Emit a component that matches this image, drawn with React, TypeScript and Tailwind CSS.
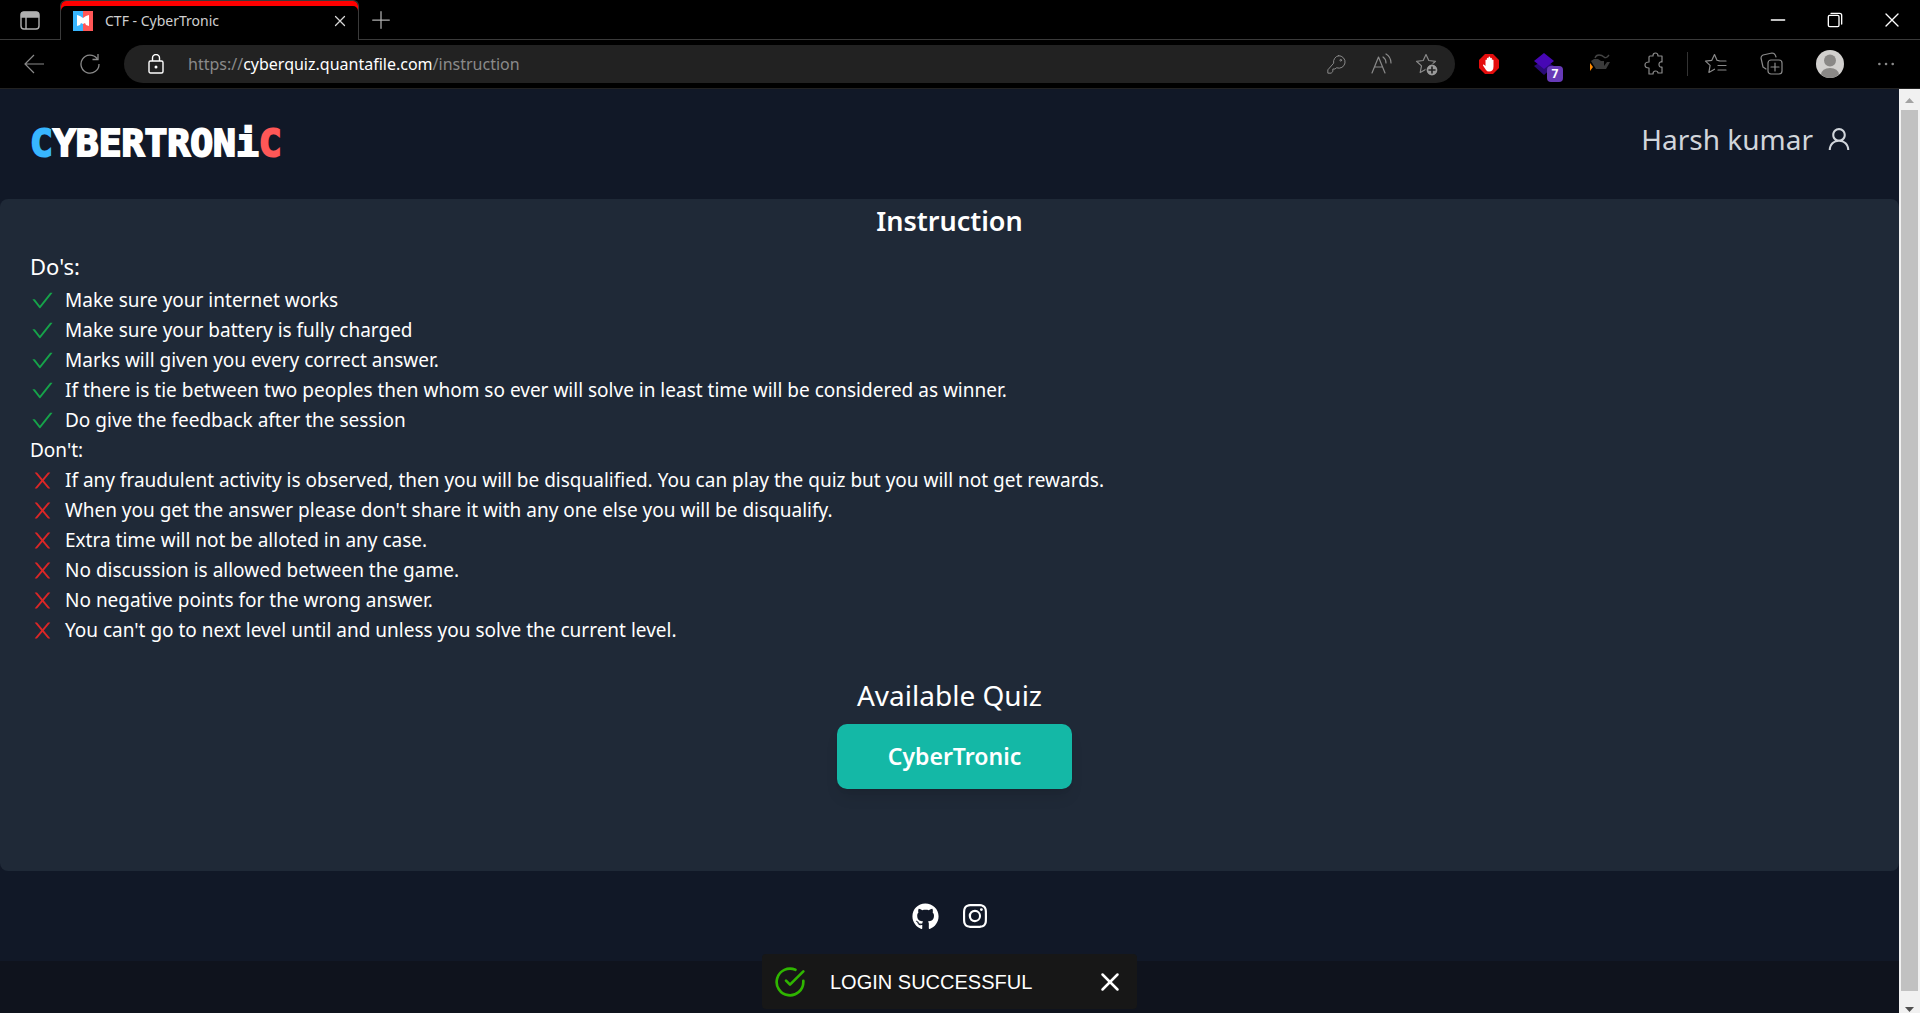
import type { ReactNode } from "react";
import { AiOutlineCheck, AiOutlineUser } from "react-icons/ai";
import { FaGithub } from "react-icons/fa";
import { BsInstagram } from "react-icons/bs";
import { FiCheckCircle, FiX } from "react-icons/fi";

const dos = [
  "Make sure your internet works",
  "Make sure your battery is fully charged",
  "Marks will given you every correct answer.",
  "If there is tie between two peoples then whom so ever will solve in least time will be considered as winner.",
  "Do give the feedback after the session",
];

const donts = [
  "If any fraudulent activity is observed, then you will be disqualified. You can play the quiz but you will not get rewards.",
  "When you get the answer please don't share it with any one else you will be disqualify.",
  "Extra time will not be alloted in any case.",
  "No discussion is allowed between the game.",
  "No negative points for the wrong answer.",
  "You can't go to next level until and unless you solve the current level.",
];

function Line({ children, className = "size-6" }: { children: ReactNode; className?: string }) {
  return (
    <svg
      viewBox="0 0 24 24"
      fill="none"
      stroke="currentColor"
      strokeWidth="1.2"
      strokeLinecap="round"
      strokeLinejoin="round"
      className={className}
    >
      {children}
    </svg>
  );
}

function CrossMark() {
  return (
    <svg viewBox="0 0 1024 1024" fill="currentColor" className="size-[25px] shrink-0 text-[#dc2626]">
      <path d="M563.8 512l262.5-312.9c4.4-5.2.7-13.1-6.1-13.1h-79.8c-4.7 0-9.2 2.1-12.3 5.7L511.6 449.8 295.1 191.7c-3-3.6-7.500-5.700-12.300-5.700H203c-6.800 0-10.500 7.900-6.100 13.100L459.400 512 196.900 824.900A7.950 7.950 0 0 0 203 838h79.800c4.700 0 9.200-2.100 12.300-5.700l216.500-258.100 216.500 258.100c3 3.600 7.500 5.700 12.300 5.700h79.800c6.800 0 10.500-7.900 6.100-13.100L563.800 512z" />
    </svg>
  );
}

function TabStrip() {
  return (
    <div className="flex h-10 items-stretch">
      <button aria-label="Tab actions" className="flex w-15 items-center justify-center border-b border-[#3a3a3a] text-[#b0b0b0]">
        <svg viewBox="0 0 20 20" className="size-5" fill="none" stroke="currentColor" strokeWidth="1.4">
          <rect x="1" y="2" width="18" height="17" rx="3" />
          <path d="M1.5 4.5a2 2 0 0 1 2-2h13a2 2 0 0 1 2 2V7h-17z" fill="currentColor" />
          <path d="M6 7v12" />
        </svg>
      </button>
      <div className="flex w-[299px] items-center rounded-t-md border-x border-t border-[#3a3a3a] pr-3 pl-3 shadow-[inset_0_5px_0_#ff0000]">
        <svg viewBox="0 0 20 20" className="size-5">
          <path d="M0 0h10v20H0z" fill="#38b6ff" />
          <path d="M10 0h10v20H10z" fill="#ff5757" />
          <path d="M4 4l3 1 3 2 3-2 3-1v11l-3-1-1-2-2 1-2-1-1 2-3 1z" fill="#fff" />
        </svg>
        <span className="ml-3 flex-1 text-sm text-[#d0d0d0]">CTF - CyberTronic</span>
        <button aria-label="Close tab" className="text-[#d8d8d8]">
          <Line className="size-3"><path d="M3 3l18 18M21 3L3 21" strokeWidth="2.500" /></Line>
        </button>
      </div>
      <div className="flex flex-1 items-center justify-between border-b border-[#3a3a3a] pl-3 text-white">
        <button aria-label="New tab" className="text-[#b0b0b0]">
          <Line className="size-5"><path d="M12 2v20M2 12h20" strokeWidth="1.5" /></Line>
        </button>
        <div className="flex items-center">
          <button aria-label="Minimize" className="flex w-[57px] justify-center">
            <Line className="size-4"><path d="M2 12h20" strokeWidth="2" /></Line>
          </button>
          <button aria-label="Restore" className="flex w-[57px] justify-center">
            <Line className="size-4"><rect x="2" y="5" width="16" height="17" rx="2" strokeWidth="2" /><path d="M6 2h13a3 3 0 0 1 3 3v13" strokeWidth="2" /></Line>
          </button>
          <button aria-label="Close window" className="flex w-[57px] justify-center">
            <Line className="size-4"><path d="M3 3l18 18M21 3L3 21" strokeWidth="2" /></Line>
          </button>
        </div>
      </div>
    </div>
  );
}

function Toolbar() {
  return (
    <div className="flex h-12 items-center text-[#8a8a8a]">
      <button aria-label="Back" className="ml-6 w-5">
        <svg viewBox="0 0 20 20" className="size-5" fill="none" stroke="currentColor" strokeWidth="1.2"><path d="M20 10H1M10 1l-9 9 9 9" /></svg>
      </button>
      <button aria-label="Refresh" className="ml-9 w-5">
        <svg viewBox="0 0 20 20" className="size-5" fill="none" stroke="currentColor" strokeWidth="1.3"><path d="M17 4.500A9 9 0 1 0 19 10M18 0v5.500h-5.500" /></svg>
      </button>
      <div className="ml-6 flex h-[38px] flex-1 items-center rounded-full bg-[#222222] pr-4 pl-6">
        <svg viewBox="0 0 16 20" className="h-5 w-4 text-white" fill="none" stroke="currentColor" strokeWidth="1.4">
          <rect x="1" y="7" width="14" height="12" rx="1.500" />
          <path d="M4.500 7V4a3.500 3.500 0 0 1 7 0v3" />
          <circle cx="8" cy="13" r=".8" fill="currentColor" />
        </svg>
        <span className="ml-6 flex-1 text-base">
          https://<span className="text-white">cyberquiz.quantafile.com</span>/instruction
        </span>
        <div className="flex items-center gap-[22px]">
          <button aria-label="Saved passwords"><Line className="size-5"><path d="M14 2a7.500 7.500 0 1 1-2.500 14.500L9.500 18H7v3l-2 2H1v-4l7-8A7.500 7.500 0 0 1 14 2z" /><circle cx="16.500" cy="7.500" r="1" /></Line></button>
          <button aria-label="Read aloud"><Line className="size-6"><path d="M3 21L9.500 5 16 21M5.500 15h8M14 5q3 2 3 6M17 2q5 3 5 9" /></Line></button>
          <button aria-label="Add to favorites">
            <Line className="size-6"><path d="M11 2.500l2.800 6 6.700.8-5 4.600 1.300 6.600-5.800-3.300-5.800 3.300 1.300-6.600-5-4.600 6.700-.8z" /><circle cx="17" cy="18" r="6" fill="#9a9a9a" stroke="#222" /><path d="M17 15v6M14 18h6" stroke="#222" strokeWidth="1.600" /></Line>
          </button>
        </div>
      </div>
      <div className="flex items-center">
        <button aria-label="Ad blocker" className="ml-6">
          <svg viewBox="0 0 20 20" className="size-5"><path d="M6 0h8l6 6v8l-6 6H6l-6-6V6z" fill="#e40d0d" /><path d="M6.500 6v6L4.800 10.500q-1.200 0-.8 1L7 16q1 1.500 3 1.500 4.500 0 4.500-5V6q-.9-.9-1.600 0V4.200q-.9-.9-1.700 0V3q-.9-1-1.700 0v1.200q-.9-.9-1.600 0V6q-.7-.9-1.400 0z" fill="#fff" /></svg>
        </button>
        <button aria-label="Extension, 7 items" className="relative ml-8 size-7">
          <svg viewBox="0 0 28 28" className="size-7"><path d="M3 16l10-6 10 6-10 9z" fill="#2a0a78" /><path d="M13 3l10 8-10 8-10-8z" fill="#4707b5" /></svg>
          <span className="absolute top-4 left-4 flex size-4 items-center justify-center rounded-sm bg-[#673ab7] text-xs font-bold text-white">7</span>
        </button>
        <button aria-label="Burp extension" className="ml-7">
          <svg viewBox="0 0 24 24" className="size-6"><path d="M4 9l3-2h4l3 2h3v5l3-4h3l-4 7H9z" fill="#3a3a3a" /><path d="M8 6q1-3 4-3t5 2 5-2" fill="none" stroke="#444" strokeWidth="1.300" /><path d="M3 11l3 4-3 4z" fill="#ff8a00" /></svg>
        </button>
        <button aria-label="Extensions" className="ml-8"><Line className="size-6"><path d="M7 4h3q0-3 2.500-3T15 4h4v6q-3-.5-3 2.500t3 2.500v6h-4q0-2-2.500-2T10 22H6v-6q-4 0-4-3t4-3V5q0-1 1-1z" /></Line></button>
        <div className="ml-5 h-6 w-px bg-[#333333]" />
        <button aria-label="Favorites" className="ml-4"><Line className="size-6"><path d="M15 8.500l-2-.2L10.500 2.500 7.800 8.300l-6.300.8 4.600 4.300-1.200 7 5.600-3.200M15 9h7M14 13.500h8M14 18h8" /></Line></button>
        <button aria-label="Collections" className="ml-8"><Line className="size-6"><rect x="8" y="8" width="14" height="14" rx="3" /><path d="M15 11v8M11 15h8M6 17l-3-2-2-9q0-2 2-3l9-2q3 0 4 4" /></Line></button>
        <button aria-label="Profile" className="ml-8">
          <svg viewBox="0 0 28 28" className="size-7"><circle cx="14" cy="14" r="14" fill="#d2d0ce" /><circle cx="14" cy="10.500" r="6" fill="#8a8886" /><path d="M5 24.500Q6 18 14 18t9 6.500q-4 3.500-9 3.500t-9-3.500z" fill="#8a8886" /></svg>
        </button>
        <button aria-label="Settings and more" className="mr-6 ml-8"><Line className="size-5"><path d="M4 12h.1M12 12h.1M20 12h.1" strokeWidth="3" /></Line></button>
      </div>
    </div>
  );
}

function Scrollbar() {
  return (
    <div aria-hidden="true" className="flex w-[21px] flex-col items-center bg-[#f1f1f1]">
      <svg viewBox="0 0 21 21" className="size-[21px]"><path d="M6 14l4.500-5 4.500 5z" fill="#a3a3a3" /></svg>
      <div className="w-[17px] flex-1 bg-[#c1c1c1]" />
      <svg viewBox="0 0 21 22" className="h-[22px] w-[21px]"><path d="M6 16l4.500 5 4.500-5z" fill="#505050" /></svg>
    </div>
  );
}

export default function App() {
  return (
    <div className="flex h-screen flex-col overflow-hidden bg-black font-['Noto_Sans',sans-serif]">
      <TabStrip />
      <Toolbar />
      <div className="flex min-h-0 flex-1 border-t border-[#222222]">
        <div className="flex min-w-0 flex-1 flex-col bg-[#0f131d]">
          <header className="flex h-[110px] shrink-0 items-start justify-between bg-[#111827] pr-[46px] pl-[30px]">
            <a
              href="#home"
              aria-label="CyberTronic home"
              className="pt-8 font-['DejaVu_Sans_Mono',monospace] text-[38px] leading-[44px] font-bold text-white [-webkit-text-stroke:2px_currentColor]"
            >
              <span className="text-[#38b6ff]">C</span>YBERTRONi<span className="text-[#ff5757]">C</span>
            </a>
            <button className="flex items-center gap-3 pt-[30px] text-[28px] leading-10 text-[#d1d5db]">
              Harsh kumar
              <AiOutlineUser className="size-7" />
            </button>
          </header>
          <main className="shrink-0 bg-[#111827]">
            <div className="rounded-lg bg-[#1f2937] px-[30px] pb-[82px] text-white">
              <h1 className="pt-1 text-center text-[27px] leading-9 font-semibold">Instruction</h1>
              <h2 className="mt-3 text-[22px] leading-[30px]">Do's:</h2>
              <ul className="mt-1 text-[19px] leading-[30px]">
                {dos.map((t) => (
                  <li key={t} className="flex items-center gap-[10px]">
                    <AiOutlineCheck className="size-[25px] shrink-0 text-[#16a34a]" />
                    {t}
                  </li>
                ))}
              </ul>
              <h2 className="text-[19px] leading-[30px]">Don't:</h2>
              <ul className="text-[19px] leading-[30px]">
                {donts.map((t) => (
                  <li key={t} className="flex items-center gap-[10px]">
                    <CrossMark />
                    {t}
                  </li>
                ))}
              </ul>
              <section className="mt-7 flex flex-col items-center">
                <h2 className="text-[28px] leading-[45px]">Available Quiz</h2>
                <button className="mt-1.5 ml-[10px] h-[65px] w-[235px] rounded-[10px] bg-[#14b8a6] text-[23px] font-semibold shadow-lg">CyberTronic</button>
              </section>
            </div>
          </main>
          <footer className="flex h-[90px] shrink-0 items-center justify-center gap-6 bg-[#111827] text-white">
            <a href="#github" aria-label="GitHub"><FaGithub className="size-[27px]" /></a>
            <a href="#instagram" aria-label="Instagram"><BsInstagram className="size-6" /></a>
          </footer>
        </div>
        <Scrollbar />
      </div>
      <div role="status" className="fixed bottom-1 left-1/2 flex h-[55px] w-[375px] -translate-x-[198px] items-center rounded bg-[#171717] pr-3 pl-3 font-['Liberation_Sans',sans-serif] text-xl text-white">
        <FiCheckCircle className="size-8 text-[#2fb500]" />
        <span className="ml-6 flex-1">LOGIN SUCCESSFUL</span>
        <button aria-label="Dismiss"><FiX className="size-[30px]" /></button>
      </div>
    </div>
  );
}
